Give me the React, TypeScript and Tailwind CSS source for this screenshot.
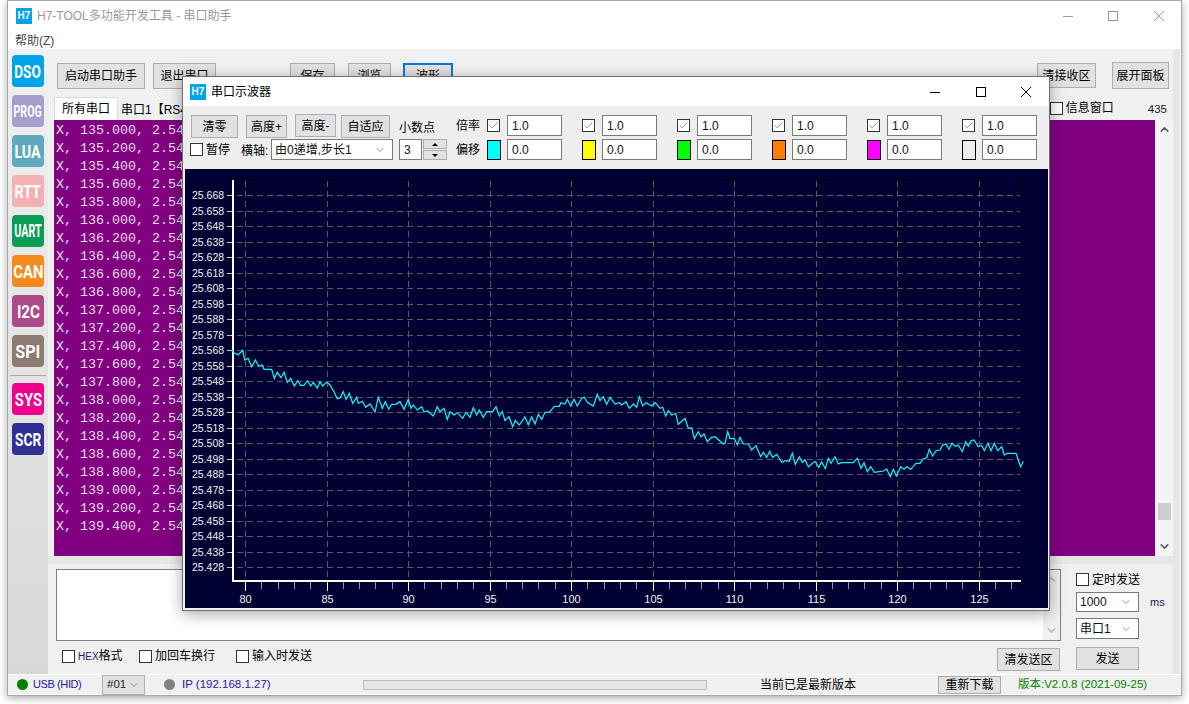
import type { ReactNode } from "react";
import { ChevronDown, ChevronUp, Check } from "lucide-react";

const tiles = [
  { label: "DSO", color: "bg-[#00a2e8]", fit: "text-[19px] scale-x-[0.72]" },
  { label: "PROG", color: "bg-[#a79ecb]", fit: "text-[17px] scale-x-[0.62]" },
  { label: "LUA", color: "bg-[#5fa9bc]", fit: "text-[19px] scale-x-[0.75]" },
  { label: "RTT", color: "bg-[#f4b1b4]", fit: "text-[19px] scale-x-[0.75]" },
  { label: "UART", color: "bg-[#0b9c55]", fit: "text-[18px] scale-x-[0.6]" },
  { label: "CAN", color: "bg-[#f58a1f]", fit: "text-[19px] scale-x-[0.78]" },
  { label: "I2C", color: "bg-[#ac4a8a]", fit: "text-[19px] scale-x-[0.8]" },
  { label: "SPI", color: "bg-[#8c7b70]", fit: "text-[19px] scale-x-[0.85]" },
];
const tiles2 = [
  { label: "SYS", color: "bg-[#ec008c]", fit: "text-[19px] scale-x-[0.78]" },
  { label: "SCR", color: "bg-[#2e3192]", fit: "text-[19px] scale-x-[0.72]" },
];

const rows = Array.from({ length: 23 }, (_, i) => (135 + i * 0.2).toFixed(3));
const series = ["bg-[#00ffff]", "bg-[#ffff00]", "bg-[#00ff00]", "bg-[#ff8000]", "bg-[#ff00ff]", "bg-[#eeeeee]"];

// trace points, read off the reference (x, y in window pixels, three runs)
const run1 = [5,30,12,38,25,44,38,31,44,60,54,55,65,80,76,60,86,78,97,75,102,88,125,88,133,115,142,97,153,113,162,97,172,127,182,115,193,138,203,122,212,136,222,136,232,122,242,138,250,127,262,144,270,125,278,138,290,126,300,135,312,155,322,176,330,174,340,155,348,178,358,160,368,190,380,172,385,190,397,184,407,202,420,192,435,216,445,172,457,205,466,185,476,208,485,193,498,193,510,185,522,208,535,178,543,205,550,195,562,210,575,200,582,216,592,212,610,228,622,200,630,215,642,205,652,238,660,215,672,225,682,218,698,235,708,217,720,232,730,203,740,225,748,210,760,232,770,215,788,214,798,200,808,228];
const run2 = [0,105,7,95,15,122,27,110,38,140,46,122,58,135,75,110,85,135,95,110,105,132,115,103,125,118,135,97,148,97,163,79,178,79,183,68,195,72,202,58,212,78,222,58,232,78,245,55,253,52,262,67,280,78,292,43,300,62,310,50,320,73,330,52,345,72,358,68,365,75,378,65,388,85,400,72,410,82,418,50,428,78,438,68,455,78,466,68,480,85,488,82,497,108,505,92,515,105,527,100,535,133,555,115,565,145,575,143,583,176,595,155,603,170,612,162,622,185,635,172,645,170,670,192,675,190,683,155,690,176,703,175,712,195,720,172,730,192,745,192,755,210,768,197,782,230,790,217,800,232,810,212];
const run3 = [0,97,8,112,20,103,35,127,45,122,58,124,67,100,76,133,88,110,97,127,105,119,115,140,135,124,146,142,155,125,166,146,175,115,183,130,195,110,205,132,215,128,250,128,262,115,273,145,282,128,292,155,302,140,313,157,327,155,340,153,350,147,361,170,370,148,379,168,392,140,402,148,410,140,422,148,438,130,450,130,458,118,470,113,478,88,488,108,498,92,510,90,518,75,528,72,537,88,546,70,556,79,565,76,577,95,587,65,595,79,603,62,612,60,625,80,635,76,643,92,654,70,663,92,673,70,683,92,695,80,703,105,710,100,738,100,745,120,752,140,760,124];

function toPoints(run: number[], ox: number, oy: number) {
  const out: string[] = [];
  for (let i = 0; i < run.length; i += 2) {
    out.push(`${(run[i] / 3 + ox).toFixed(1)},${(run[i + 1] / 3 + oy).toFixed(1)}`);
  }
  return out;
}

const trace = [...toPoints(run1, 230, 340), ...toPoints(run2, 500, 380), ...toPoints(run3, 770, 420)].join(" ");

function Btn({ label, active = false, className = "" }: { label: string; active?: boolean; className?: string }) {
  const edge = active ? "border-2 border-[#0078d7]" : "border border-[#adadad]";
  return (
    <div className={`flex shrink-0 items-center justify-center whitespace-nowrap bg-[#e1e1e1] text-xs leading-none text-black ${edge} ${className}`}>
      {label}
    </div>
  );
}

function Box({ checked = false }: { checked?: boolean }) {
  return (
    <div className="flex h-[13px] w-[13px] shrink-0 items-center justify-center border border-[#333333] bg-white">
      {checked && <Check size={11} strokeWidth={1.6} className="text-[#666666]" />}
    </div>
  );
}

function Field({ value, className = "" }: { value: string; className?: string }) {
  return (
    <div className={`flex shrink-0 items-center border border-[#7a7a7a] bg-white pl-[4px] text-xs leading-none text-[#111111] ${className}`}>
      {value}
    </div>
  );
}

function Select({ value, className = "" }: { value: string; className?: string }) {
  return (
    <div className={`flex shrink-0 items-center justify-between border border-[#7a7a7a] bg-white pl-[3px] pr-[6px] text-xs leading-none text-[#111111] ${className}`}>
      <span>{value}</span>
      <ChevronDown size={12} strokeWidth={1.4} className="text-[#666666]" />
    </div>
  );
}

function CheckLabel({ label, className = "" }: { label: ReactNode; className?: string }) {
  return (
    <div className={`flex shrink-0 items-center gap-[3px] whitespace-nowrap text-xs leading-none text-black ${className}`}>
      <Box />
      <span>{label}</span>
    </div>
  );
}

function Tile({ label, color, fit }: { label: string; color: string; fit: string }) {
  return (
    <div className={`flex h-[32px] w-[32px] shrink-0 items-center justify-center overflow-hidden rounded-[4px] ${color}`}>
      <span className={`font-['Roboto',sans-serif] font-bold leading-none text-white ${fit}`}>{label}</span>
    </div>
  );
}

function LogoIcon() {
  return (
    <div className="flex h-[16px] w-[16px] shrink-0 items-center justify-center bg-[#00a2e8] text-[10px] font-bold leading-none text-white">
      H7
    </div>
  );
}

function Scope() {
  const xMajor = [80, 85, 90, 95, 100, 105, 110, 115, 120, 125];
  const step = 16.3;
  const xOf = (v: number) => Math.round(245 + (v - 80) * step) + 0.5;
  const ticks = Array.from({ length: 48 }, (_, i) => 80 + i);
  const labels = Array.from({ length: 25 }, (_, i) => ({
    y: Math.round(195 + i * 15.5) + 0.5,
    text: (25.668 - i * 0.01).toFixed(3),
  }));

  return (
    <svg viewBox="185 169 863 439" className="block h-[439px] w-[863px]">
      <rect x="185" y="169" width="863" height="439" fill="#000033" />
      {labels.map((l) => (
        <g key={l.text}>
          <line x1="227" x2="1020" y1={l.y} y2={l.y} stroke="#5c5c5c" strokeDasharray="6 4" />
          <line x1="227" x2="232" y1={l.y} y2={l.y} stroke="#c8c8c8" />
          <text x="192" y={l.y + 3} fill="#f0f0f0" className="text-[10.5px]">
            {l.text}
          </text>
        </g>
      ))}
      {xMajor.map((v) => (
        <g key={v}>
          <line x1={xOf(v)} x2={xOf(v)} y1="181" y2="580" stroke="#5c5c5c" strokeDasharray="6 4" />
          <text x={xOf(v)} y="603" fill="#f0f0f0" textAnchor="middle" className="text-[11px]">
            {v}
          </text>
        </g>
      ))}
      {ticks.map((v) => (
        <line
          key={v}
          x1={xOf(v)}
          x2={xOf(v)}
          y1="582"
          y2={v % 5 === 0 ? 591 : 589}
          stroke={v % 5 === 0 ? "#ffffff" : "#999999"}
        />
      ))}
      <line x1="233" x2="1021" y1="180.5" y2="180.5" stroke="#000000" />
      <line x1="1021.5" x2="1021.5" y1="180" y2="580" stroke="#000000" />
      <line x1="233" x2="233" y1="180" y2="582" stroke="#ffffff" strokeWidth="2" />
      <line x1="233" x2="1021" y1="581" y2="581" stroke="#ffffff" strokeWidth="2" />
      <polyline points={trace} fill="none" stroke="#14f5f5" strokeWidth="1.2" />
    </svg>
  );
}

function ScopeWindow() {
  return (
    <div className="absolute left-[174px] top-[75px] flex h-[535px] w-[868px] flex-col border border-[#707070] bg-[#eeeeee] shadow-[0_3px_14px_rgba(0,0,0,0.35)]">
      <div className="flex h-[29px] shrink-0 items-center bg-white pl-[7px]">
        <LogoIcon />
        <span className="ml-[5px] text-xs leading-none text-black">串口示波器</span>
        <div className="ml-auto flex items-center">
          <svg width="12" height="12" viewBox="0 0 12 12" className="mr-[34px]">
            <line x1="1" x2="11" y1="6.5" y2="6.5" stroke="#000000" />
          </svg>
          <svg width="12" height="12" viewBox="0 0 12 12" className="mr-[33px]">
            <rect x="1.5" y="1.5" width="9" height="9" fill="none" stroke="#000000" />
          </svg>
          <svg width="12" height="12" viewBox="0 0 12 12" className="mr-[17px]">
            <path d="M1 1L11 11M11 1L1 11" stroke="#000000" fill="none" />
          </svg>
        </div>
      </div>

      <div className="h-[63px] shrink-0 pl-[8px]">
        <div className="flex h-[32px] items-start pt-[9px]">
          <Btn label="清零" className="h-[23px] w-[47px]" />
          <Btn label="高度+" className="ml-[8px] h-[23px] w-[41px]" />
          <Btn label="高度-" className="ml-[8px] -mt-px h-[23px] w-[41px]" />
          <Btn label="自适应" className="ml-[5px] h-[23px] w-[49px]" />
          <span className="ml-[9px] mt-[7px] w-[36px] shrink-0 text-xs leading-none text-black">小数点</span>
          <span className="ml-[21px] mt-[5px] w-[31px] shrink-0 text-xs leading-none text-black">倍率</span>
          {series.map((c) => (
            <div key={c} className="flex w-[95px] shrink-0 items-start">
              <div className="mt-[4px]">
                <Box checked />
              </div>
              <Field value="1.0" className="ml-[7px] h-[21px] w-[55px]" />
            </div>
          ))}
        </div>
        <div className="flex h-[22px] items-center pt-px">
          <CheckLabel label="暂停" className="w-[51px] -ml-px" />
          <span className="w-[30px] shrink-0 pt-[2px] text-xs leading-none text-black">横轴:</span>
          <Select value="由0递增,步长1" className="h-[21px] w-[122px]" />
          <Field value="3" className="ml-[6px] h-[21px] w-[23px]" />
          <div className="ml-px flex h-[21px] w-[24px] shrink-0 flex-col justify-between">
            <div className="flex h-[10px] items-center justify-center border border-[#adadad] bg-[#e1e1e1]">
              <div className="h-0 w-0 border-x-[3px] border-b-[3px] border-x-transparent border-b-black" />
            </div>
            <div className="flex h-[10px] items-center justify-center border border-[#adadad] bg-[#e1e1e1]">
              <div className="h-0 w-0 border-x-[3px] border-t-[3px] border-x-transparent border-t-black" />
            </div>
          </div>
          <span className="ml-[9px] w-[31px] shrink-0 text-xs leading-none text-black">偏移</span>
          {series.map((c) => (
            <div key={c} className="flex w-[95px] shrink-0 items-center">
              <div className={`h-[20px] w-[14px] shrink-0 border border-black ${c}`} />
              <Field value="0.0" className="ml-[6px] h-[21px] w-[55px]" />
            </div>
          ))}
        </div>
      </div>

      <div className="ml-[2px]">
        <Scope />
      </div>
    </div>
  );
}

export default function App() {
  return (
    <div className="h-[704px] w-[1189px] overflow-hidden bg-white pl-[7px] font-['Liberation_Sans','Noto_Sans_CJK_SC',sans-serif]">
      <div className="relative flex h-[696px] w-[1175px] flex-col border border-[#a8a8a8] bg-white shadow-[0_2px_8px_rgba(0,0,0,0.35)]">
        {/* title bar */}
        <div className="flex h-[29px] shrink-0 items-center pl-[8px]">
          <LogoIcon />
          <span className="ml-[5px] whitespace-nowrap text-xs leading-none text-[#999999]">H7-TOOL多功能开发工具 - 串口助手</span>
          <div className="ml-auto flex items-center">
            <svg width="12" height="12" viewBox="0 0 12 12" className="mr-[33px]">
              <line x1="1" x2="11" y1="6.5" y2="6.5" stroke="#999999" />
            </svg>
            <svg width="12" height="12" viewBox="0 0 12 12" className="mr-[34px]">
              <rect x="1.5" y="1.5" width="9" height="9" fill="none" stroke="#999999" />
            </svg>
            <svg width="12" height="12" viewBox="0 0 12 12" className="mr-[16px]">
              <path d="M1 1L11 11M11 1L1 11" stroke="#999999" fill="none" />
            </svg>
          </div>
        </div>

        {/* menu */}
        <div className="flex h-[19px] shrink-0 items-center pl-[7px] pt-[3px] text-xs leading-none text-[#444444]">帮助(Z)</div>

        {/* body */}
        <div className="flex h-[625px] shrink-0">
          <div className="flex w-[40px] shrink-0 flex-col items-center gap-[8px] bg-linear-to-b from-[#f0f0f0] to-[#d8d8d8] pt-[6px]">
            {tiles.map((t) => (
              <Tile key={t.label} {...t} />
            ))}
            <div className="-mb-px h-px w-[36px] shrink-0 bg-[#a8a8a8]" />
            {tiles2.map((t) => (
              <Tile key={t.label} {...t} />
            ))}
          </div>

          <div className="flex w-[1125px] shrink-0 flex-col bg-[#f0f0f0]">
            {/* toolbar */}
            <div className="flex h-[48px] shrink-0 items-start pt-[14px]">
              <Btn label="启动串口助手" className="ml-[9px] h-[26px] w-[88px]" />
              <Btn label="退出串口" className="ml-[8px] h-[26px] w-[63px]" />
              <Btn label="保存" className="ml-[74px] h-[26px] w-[45px]" />
              <Btn label="浏览" className="ml-[13px] h-[26px] w-[43px]" />
              <Btn label="波形" active className="ml-[12px] h-[26px] w-[50px]" />
              <Btn label="清接收区" className="ml-[584px] h-[25px] w-[59px]" />
              <Btn label="展开面板" className="ml-[16px] -mt-px h-[27px] w-[57px]" />
            </div>

            {/* tabs */}
            <div className="flex h-[23px] shrink-0 items-end pl-[6px]">
              <div className="flex h-[23px] w-[64px] shrink-0 items-center justify-center border border-b-0 border-[#d9d9d9] bg-white text-xs leading-none text-black">
                所有串口
              </div>
              <span className="ml-[3px] h-[20px] shrink-0 pt-[4px] text-xs leading-none text-black">串口1【RS4</span>
              <div className="ml-auto mb-[1px] flex h-[22px] items-center">
                <CheckLabel label="信息窗口" />
                <span className="ml-[34px] mr-[6px] pt-[3px] text-[11.5px] leading-none text-[#222222]">435</span>
              </div>
            </div>

            {/* receive area */}
            <div className="flex h-[436px] shrink-0 pl-[6px]">
              <div className="w-[1101px] shrink-0 overflow-hidden bg-[#800080] pl-[2px] pt-[2px] font-['Liberation_Mono',monospace] text-[13.33px] leading-[18px] text-[#e8dce8]">
                {rows.map((r) => (
                  <div key={r} className="h-[18px] whitespace-pre">{`X, ${r}, 2.54`}</div>
                ))}
              </div>
              <div className="ml-px flex w-[17px] shrink-0 flex-col items-center bg-[#f4f4f4] py-[3px]">
                <ChevronUp size={13} strokeWidth={3} className="text-[#606060]" />
                <div className="mt-[367px] h-[17px] w-[13px] shrink-0 bg-[#cdcdcd]" />
                <ChevronDown size={13} strokeWidth={3} className="mt-auto text-[#606060]" />
              </div>
            </div>

            <div className="h-[8px] shrink-0 bg-[#e6e6e6]" />

            {/* send area */}
            <div className="flex h-[110px] shrink-0">
              <div className="ml-[8px] flex w-[1005px] shrink-0 flex-col pt-[5px]">
                <div className="flex h-[72px] shrink-0 justify-end border border-[#808080] bg-white">
                  <div className="flex w-[17px] flex-col items-center justify-between bg-[#f0f0f0] py-[3px]">
                    <ChevronUp size={13} strokeWidth={3} className="text-[#c0c0c0]" />
                    <ChevronDown size={13} strokeWidth={3} className="text-[#c0c0c0]" />
                  </div>
                </div>
                <div className="flex h-[30px] shrink-0 items-center">
                  <CheckLabel
                    label={
                      <>
                        <span className="text-[10px] text-[#222266]">HEX</span>格式
                      </>
                    }
                    className="ml-[6px] w-[58px]"
                  />
                  <CheckLabel label="加回车换行" className="ml-[19px] w-[75px]" />
                  <CheckLabel label="输入时发送" className="ml-[22px] w-[75px]" />
                  <Btn label="清发送区" className="ml-auto mr-px mt-[7px] h-[23px] w-[63px]" />
                </div>
              </div>
              <div className="ml-[15px] flex w-[90px] shrink-0 flex-col pt-[9px]">
                <CheckLabel label="定时发送" className="h-[13px]" />
                <div className="mt-[6px] flex h-[20px] items-center">
                  <Select value="1000" className="h-[20px] w-[63px]" />
                  <span className="ml-[11px] text-[11px] leading-none text-[#222266]">ms</span>
                </div>
                <Select value="串口1" className="mt-[6px] h-[21px] w-[63px]" />
                <Btn label="发送" className="mt-[8px] h-[23px] w-[63px]" />
              </div>
            </div>
          </div>

          <div className="w-[7px] shrink-0 bg-[#e6e6e6]" />
        </div>

        {/* status bar */}
        <div className="flex h-[20px] shrink-0 items-center whitespace-nowrap border-t border-white bg-[#f0f0f0] text-[11.5px] leading-none">
          <div className="flex w-[94px] shrink-0 items-center pl-[9px]">
            <div className="h-[11px] w-[11px] shrink-0 rounded-full bg-[#008000]" />
            <span className="ml-[5px] text-[11px] tracking-[-0.4px] text-[#222299]">USB (HID)</span>
          </div>
          <div className="flex h-[20px] w-[43px] shrink-0 items-center justify-between border border-[#b0b0b0] bg-[#e1e1e1] pl-[4px] pr-[4px] text-[#222222]">
            <span>#01</span>
            <ChevronDown size={12} strokeWidth={1.4} className="text-[#666666]" />
          </div>
          <div className="ml-[19px] h-[11px] w-[11px] shrink-0 rounded-full bg-[#808080]" />
          <span className="ml-[7px] w-[181px] shrink-0 text-[#222299]">IP (192.168.1.27)</span>
          <div className="h-[10px] w-[344px] shrink-0 border border-[#bcbcbc] bg-[#e6e6e6]" />
          <span className="ml-[53px] w-[95px] shrink-0 text-xs text-black">当前已是最新版本</span>
          <Btn label="重新下载" className="ml-[83px] h-[18px] w-[63px]" />
          <span className="ml-[17px] shrink-0 text-[#008000]">版本:V2.0.8 (2021-09-25)</span>
        </div>

        <ScopeWindow />
      </div>
    </div>
  );
}
